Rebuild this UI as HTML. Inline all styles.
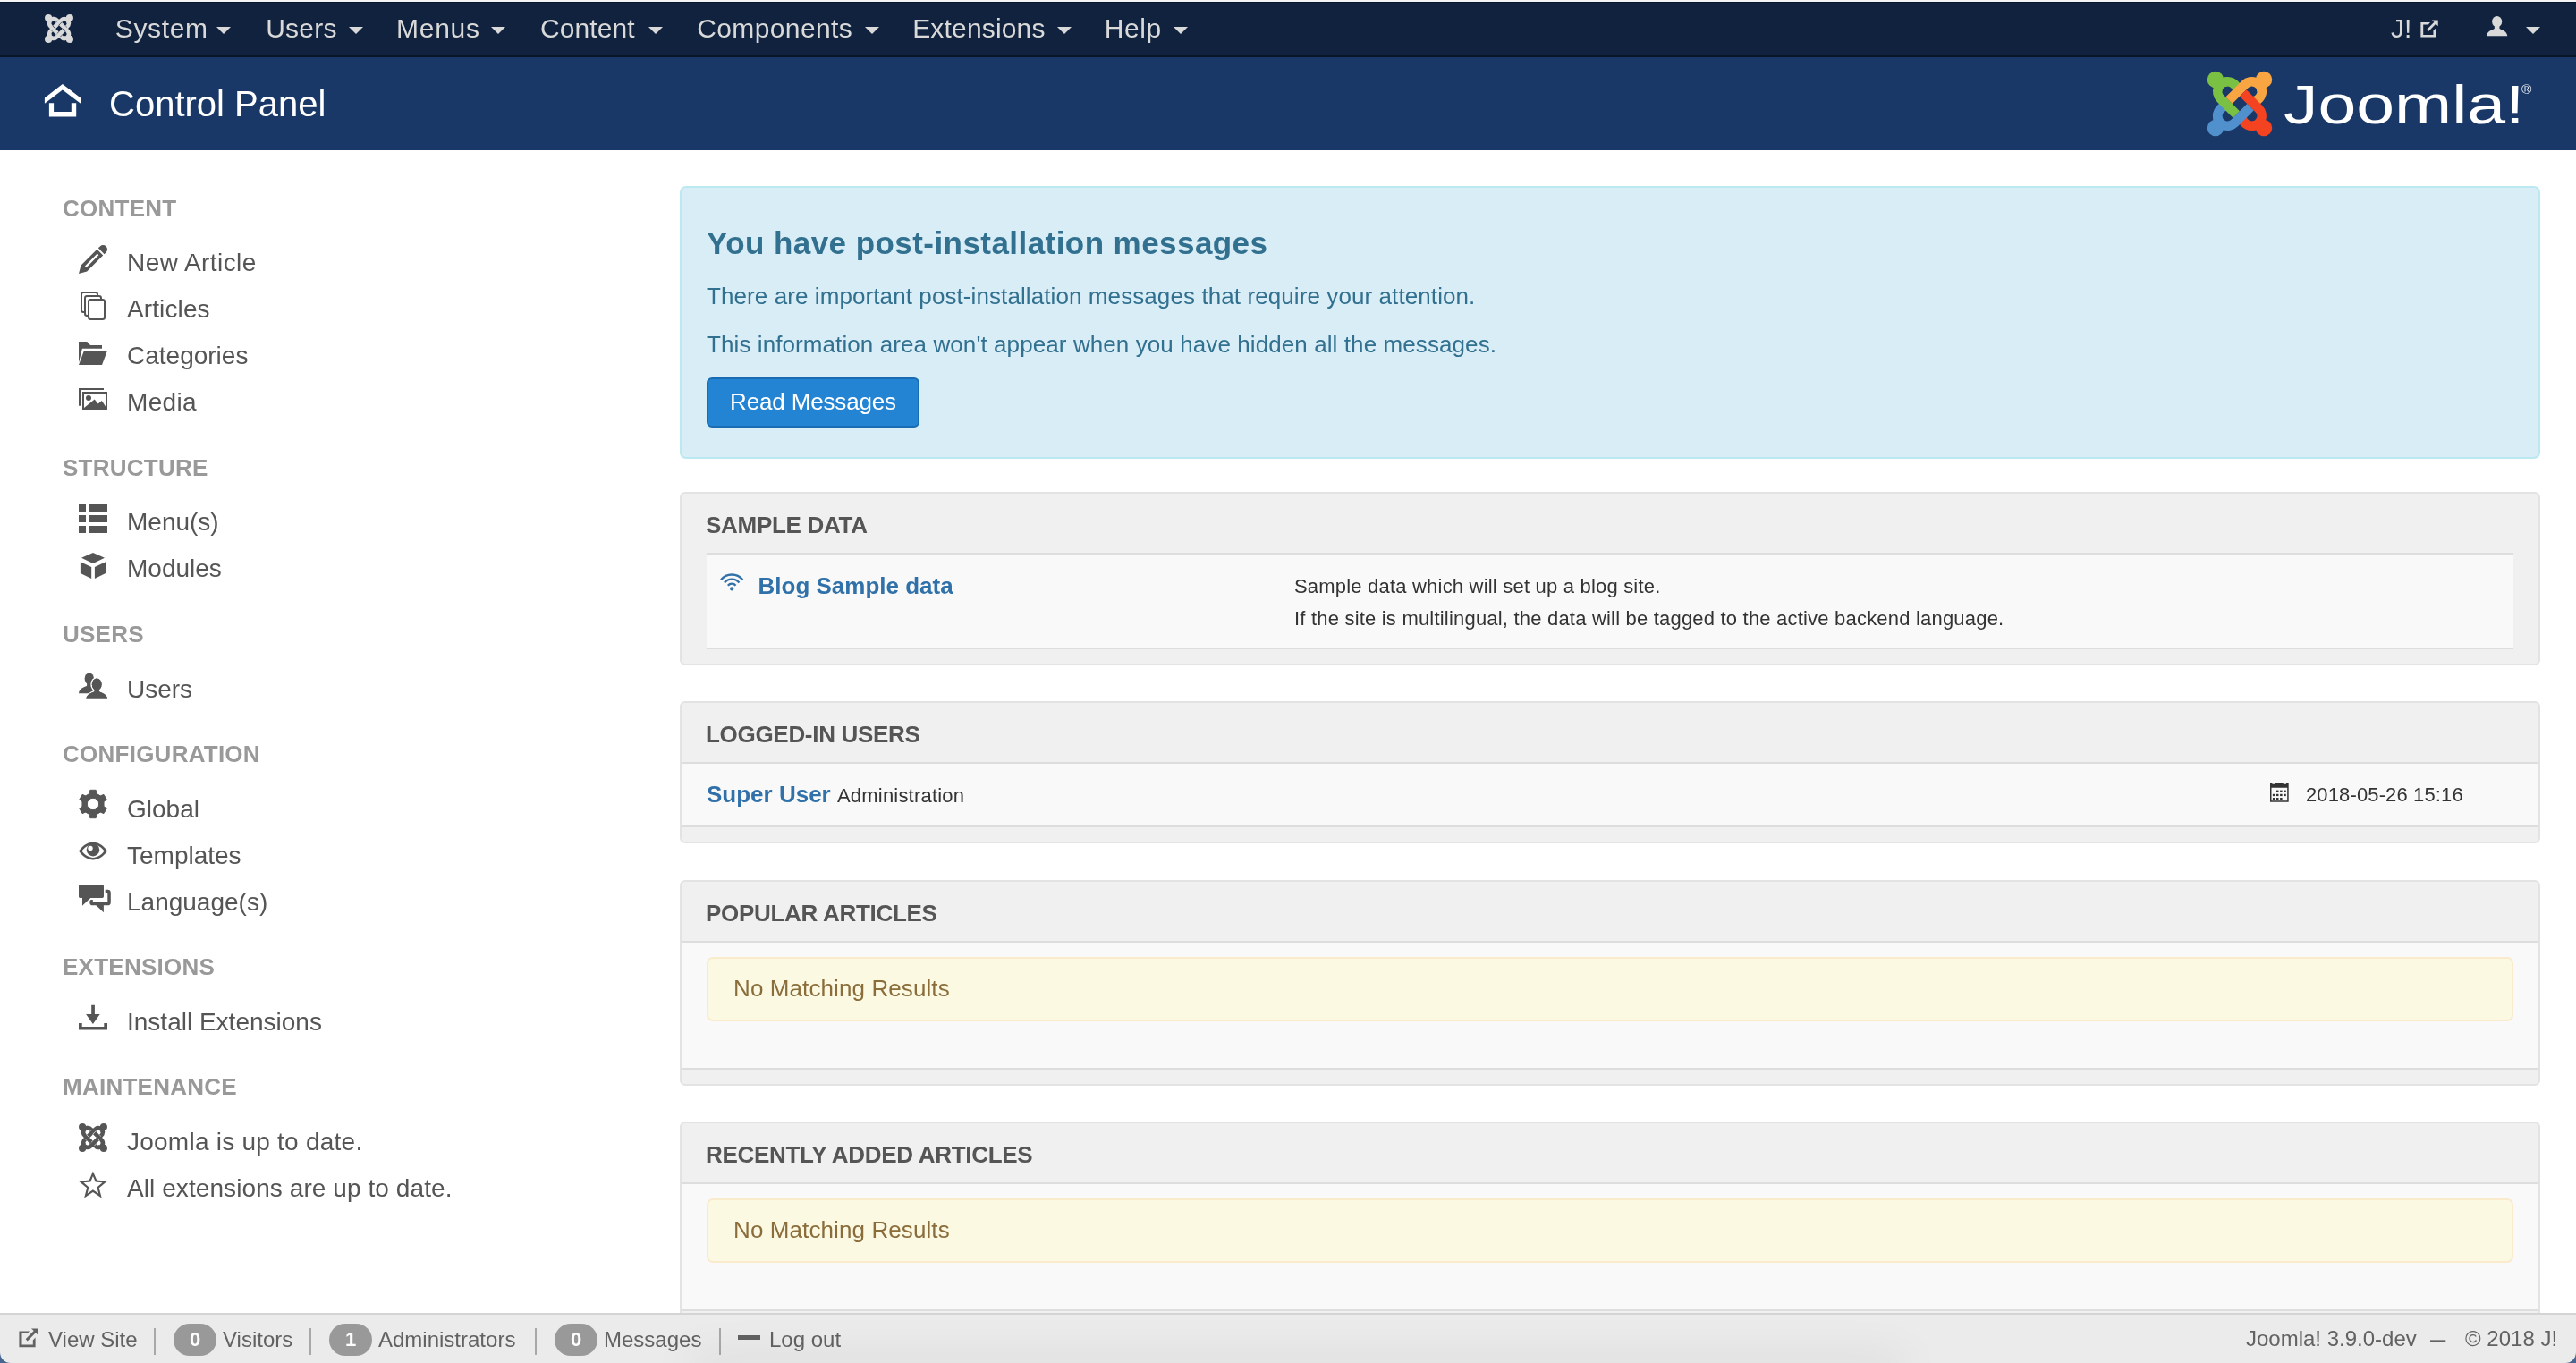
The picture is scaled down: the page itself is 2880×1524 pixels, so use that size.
<!DOCTYPE html>
<html lang="en">
<head>
<meta charset="utf-8">
<title>Control Panel - Joomla Administration</title>
<style>
*{box-sizing:border-box;margin:0;padding:0}
html,body{width:2880px;height:1524px;overflow:hidden;background:#fff}
body{font-family:"Liberation Sans",Arial,Helvetica,sans-serif;font-size:26px;line-height:36px;color:#333;position:relative}
a{color:#3071a9;text-decoration:none}
svg{display:block;overflow:visible}
i{font-style:normal}
#nav,#header,#side,#main,#status{will-change:transform}
#topline{position:absolute;left:0;top:0;width:2880px;height:2px;background:#f3f3f3}
#nav{position:absolute;left:0;top:2px;width:2880px;height:62px;background:#10223e;border-bottom:2px solid #0a1628;box-shadow:inset 0 1px 0 #07162f;color:#d9d9d9;font-size:30px;line-height:40px;white-space:nowrap}
#nav .ni{position:absolute;top:10px}
.caret{display:inline-block;width:0;height:0;vertical-align:top;border-top:8px solid #d9d9d9;border-left:8px solid transparent;border-right:8px solid transparent;margin-top:19px;margin-left:4px}
#header{position:absolute;left:0;top:64px;width:2880px;height:104px;background:#1a3867}
#header h1{position:absolute;left:122px;top:27px;font-size:40px;line-height:50px;font-weight:normal;color:#fff;white-space:nowrap}
#side{position:absolute;left:40px;top:186px;width:680px}
#side h2{font-size:26px;line-height:36px;font-weight:bold;color:#999;padding:29px 0 17px 30px;height:82px;text-transform:uppercase;letter-spacing:.25px}
#side .it{position:relative;height:52px;font-size:28px;line-height:40px;padding:6px 0 6px 102px;color:#555;white-space:nowrap}
#side .it svg{position:absolute;left:48px}
#side .d1{padding-top:7px;padding-bottom:5px}
#main{position:absolute;left:760px;top:208px;width:2080px}
.alert-info{background:#d9edf7;border:2px solid #bce8f1;border-radius:7px;color:#31708f;height:305px;margin-bottom:37px;position:relative}
.alert-info h4{font-size:35px;line-height:40px;font-weight:bold;letter-spacing:.44px;position:absolute;left:28px;top:42px;white-space:nowrap}
.alert-info p{position:absolute;left:28px;white-space:nowrap;font-size:26px;line-height:36px;letter-spacing:.09px}
.btn{position:absolute;left:28px;top:212px;height:56px;width:238px;background:#2384d3;border:2px solid #1a6cb2;border-radius:6px;color:#fff;font-size:26px;line-height:50px;text-align:center;letter-spacing:-.15px}
.well{background:#f0f0f0;border:2px solid #e3e3e3;border-radius:6px;margin-bottom:40px;padding-bottom:16px}
.well h2{font-size:26px;line-height:36px;font-weight:bold;color:#555;padding:17px 28px 13px 27px;text-transform:uppercase;letter-spacing:-.3px}
.row{background:#f9f9f9;border-top:2px solid #ddd;border-bottom:2px solid #ddd;padding:16px 28px;position:relative}
.inset{margin:0 28px}
.alert-warn{background:#fcf9e2;border:2px solid #faebcc;border-radius:7px;color:#8a6d3b;height:72px;line-height:36px;padding:15px 28px 17px;margin-bottom:36px;letter-spacing:.1px}
.small{font-size:22px;line-height:20px;letter-spacing:.2px}
#status{position:absolute;left:0;top:1468px;width:2880px;height:56px;background:#ebebeb;border-top:2px solid #d4d4d4;font-size:24px;line-height:36px;color:#626262;white-space:nowrap}
#status .t{position:absolute;top:10px}
#status .sep{position:absolute;top:15px;width:2px;height:30px;background:#a8a8a8}
#status .badge{position:absolute;top:10px;height:36px;width:48px;border-radius:18px;background:#999;color:#fff;font-weight:bold;font-size:22px;line-height:36px;text-align:center}
</style>
</head>
<body>
<div id="topline"></div>
<div id="nav">
  <svg width="36" height="36" viewBox="0 0 36 36" style="position:absolute;left:48px;top:12px"><g transform="translate(18 18) scale(1)" fill="none" stroke-width="4.65"><path transform="rotate(0)" stroke="#d9d9d9" d="M-8.07 -10.44A4.9 4.9 0 0 1 -1.17 -6.85"/><path transform="rotate(90)" stroke="#d9d9d9" d="M-8.07 -10.44A4.9 4.9 0 0 1 -1.17 -6.85"/><path transform="rotate(180)" stroke="#d9d9d9" d="M-8.07 -10.44A4.9 4.9 0 0 1 -1.17 -6.85"/><path transform="rotate(270)" stroke="#d9d9d9" d="M-8.07 -10.44A4.9 4.9 0 0 1 -1.17 -6.85"/><path transform="rotate(0)" stroke="#10223e" stroke-width="5.35" d="M-7.26 -0.34L-1.29 5.64"/><path transform="rotate(0)" stroke="#d9d9d9" d="M-6 -10.9A4.9 4.9 0 0 0 -9.46 -2.54L-1.64 5.29"/><circle transform="rotate(0)" cx="-11.9" cy="-11.9" r="4.07" fill="#d9d9d9" stroke="none"/><path transform="rotate(90)" stroke="#10223e" stroke-width="5.35" d="M-7.26 -0.34L-1.29 5.64"/><path transform="rotate(90)" stroke="#d9d9d9" d="M-6 -10.9A4.9 4.9 0 0 0 -9.46 -2.54L-1.64 5.29"/><circle transform="rotate(90)" cx="-11.9" cy="-11.9" r="4.07" fill="#d9d9d9" stroke="none"/><path transform="rotate(180)" stroke="#10223e" stroke-width="5.35" d="M-7.26 -0.34L-1.29 5.64"/><path transform="rotate(180)" stroke="#d9d9d9" d="M-6 -10.9A4.9 4.9 0 0 0 -9.46 -2.54L-1.64 5.29"/><circle transform="rotate(180)" cx="-11.9" cy="-11.9" r="4.07" fill="#d9d9d9" stroke="none"/><path transform="rotate(270)" stroke="#10223e" stroke-width="5.35" d="M-7.26 -0.34L-1.29 5.64"/><path transform="rotate(270)" stroke="#d9d9d9" d="M-6 -10.9A4.9 4.9 0 0 0 -9.46 -2.54L-1.64 5.29"/><circle transform="rotate(270)" cx="-11.9" cy="-11.9" r="4.07" fill="#d9d9d9" stroke="none"/></g></svg>
  <span class="ni" style="left:128.8px;letter-spacing:0.63px">System</span><i class="caret" style="position:absolute;left:238.3px;top:9px"></i><span class="ni" style="left:297.2px;letter-spacing:0.25px">Users</span><i class="caret" style="position:absolute;left:386.3px;top:9px"></i><span class="ni" style="left:443px;letter-spacing:0.75px">Menus</span><i class="caret" style="position:absolute;left:544.9px;top:9px"></i><span class="ni" style="left:604px;letter-spacing:0.07px">Content</span><i class="caret" style="position:absolute;left:720.6px;top:9px"></i><span class="ni" style="left:779.2px;letter-spacing:0.39px">Components</span><i class="caret" style="position:absolute;left:963px;top:9px"></i><span class="ni" style="left:1020.2px;letter-spacing:0.17px">Extensions</span><i class="caret" style="position:absolute;left:1178px;top:9px"></i><span class="ni" style="left:1234.8px;letter-spacing:0.59px">Help</span><i class="caret" style="position:absolute;left:1307.8px;top:9px"></i>
  <span class="ni" style="left:2673px">J!</span>
  <svg width="20.13" height="19.4" viewBox="0 0 22 21.2" style="position:absolute;left:2705.8px;top:20.2px"><g fill="#d9d9d9"><path d="M0.4 3.4H12L9.6 6H3.5V18.6H15.8V13.4L18.6 10.6V21.2H0.4Z"/><path d="M14 0.5H21.6V7.8L18.83 5.18L9.73 14.43L7.67 12.37L16.77 3.12Z"/></g></svg>
  <svg width="23.3" height="22.3" viewBox="0 0 23.3 22.3" style="position:absolute;left:2779.6px;top:15.9px"><g fill="#d9d9d9"><path d="M0 22.3C0.6 16.8 5.35 16 8.85 14L8.85 10.85L14.45 10.85L14.45 14C17.95 16 22.7 16.8 23.3 22.3Z"/><ellipse cx="11.65" cy="6.2" rx="5.5" ry="6.2"/></g></svg>
  <i class="caret" style="position:absolute;left:2820px;top:9px"></i>
</div>
<div id="header">
  <svg width="42" height="38" viewBox="0 0 42 38" style="position:absolute;left:49px;top:29.6px"><path fill="#fff" d="M0.9 15.4L20.9 0L41.1 15.4V21.8L20.9 6.5L0.9 21.8ZM5.9 21.3H11.1V31H30.8V21.3H36.2V36.5H5.9Z"/></svg>
  <h1>Control Panel</h1>
  <svg width="80" height="80" viewBox="0 0 80 80" style="position:absolute;left:2464.15px;top:11.6px"><g transform="translate(40 40) scale(2.27)" fill="none" stroke-width="4.65"><path transform="rotate(0)" stroke="#7ac143" d="M-8.07 -10.44A4.9 4.9 0 0 1 -1.17 -6.85"/><path transform="rotate(90)" stroke="#f9a541" d="M-8.07 -10.44A4.9 4.9 0 0 1 -1.17 -6.85"/><path transform="rotate(180)" stroke="#f44321" d="M-8.07 -10.44A4.9 4.9 0 0 1 -1.17 -6.85"/><path transform="rotate(270)" stroke="#5091cd" d="M-8.07 -10.44A4.9 4.9 0 0 1 -1.17 -6.85"/><path transform="rotate(0)" stroke="#7ac143" d="M-6 -10.9A4.9 4.9 0 0 0 -9.46 -2.54L-1.64 5.29"/><circle transform="rotate(0)" cx="-11.9" cy="-11.9" r="4.07" fill="#7ac143" stroke="none"/><path transform="rotate(90)" stroke="#f9a541" d="M-6 -10.9A4.9 4.9 0 0 0 -9.46 -2.54L-1.64 5.29"/><circle transform="rotate(90)" cx="-11.9" cy="-11.9" r="4.07" fill="#f9a541" stroke="none"/><path transform="rotate(180)" stroke="#f44321" d="M-6 -10.9A4.9 4.9 0 0 0 -9.46 -2.54L-1.64 5.29"/><circle transform="rotate(180)" cx="-11.9" cy="-11.9" r="4.07" fill="#f44321" stroke="none"/><path transform="rotate(270)" stroke="#5091cd" d="M-6 -10.9A4.9 4.9 0 0 0 -9.46 -2.54L-1.64 5.29"/><circle transform="rotate(270)" cx="-11.9" cy="-11.9" r="4.07" fill="#5091cd" stroke="none"/></g></svg>
  <svg width="300" height="80" viewBox="0 0 300 80" style="position:absolute;left:2548px;top:16px"><text x="5" y="58.2" font-family="Liberation Sans, Arial, sans-serif" font-size="61.7" fill="#fff" textLength="269.5" lengthAdjust="spacingAndGlyphs">Joomla!</text><text x="271" y="25.2" font-family="Liberation Sans, Arial, sans-serif" font-size="15.5" fill="#e8ecf3">®</text></svg>
</div>
<div id="side">
  <h2>Content</h2>
  <div class="it" style="letter-spacing:0.43px"><svg width="40" height="36" viewBox="0 -2 40 36" style="top:4px"><g transform="translate(0 32) rotate(-45)" fill="#555"><path fill-rule="evenodd" d="M0 0L8.2 -4.8H33.7V4.8H8.2ZM11 -1.15H30.5V1.15H11Z"/><path d="M35.7 -4.8H38.5A4.8 4.8 0 0 1 38.5 4.8H35.7Z"/></g></svg>New Article</div>
  <div class="it" style="letter-spacing:0.11px"><svg width="40" height="36" viewBox="0 -2 40 36" style="top:4px"><g fill="#fff" stroke="#555" stroke-width="2"><rect x="3" y="1" width="18" height="22" rx="2.2"/><rect x="7" y="5" width="18" height="22" rx="2.2"/><rect x="11" y="9" width="18" height="22" rx="2.2"/></g></svg>Articles</div>
  <div class="it"><svg width="40" height="36" viewBox="0 -2 40 36" style="top:4px"><path fill="#555" d="M0 4H9.3L13 8H26V11.8H3.9L0 27.6ZM6 14H32L26 30H0Z"/></svg>Categories</div>
  <div class="it" style="letter-spacing:0.33px"><svg width="40" height="36" viewBox="0 -2 40 36" style="top:4px"><g fill="#555"><path d="M0 4H28V5.9H2V23.8H0Z"/><path fill-rule="evenodd" d="M4 8H32V28H4ZM6 10V26H30V10Z"/><circle cx="11" cy="14.9" r="3"/><path d="M6 26L17.7 16.4L21.7 21.6L25.8 18.1L30 24.6V26Z"/></g></svg>Media</div>
  <h2>Structure</h2>
  <div class="it"><svg width="40" height="36" viewBox="0 -2 40 36" style="top:4px"><path fill="#555" d="M0 0h8v8h-8zM12 0h20v8h-20zM0 12h8v8h-8zM12 12h20v8h-20zM0 24h8v8h-8zM12 24h20v8h-20z"/></svg>Menu(s)</div>
  <div class="it"><svg width="40" height="36" viewBox="0 -2 40 36" style="top:4px"><path fill="#555" d="M16 2L29 7.7L16 13.9L3 7.7ZM1.9 12.3L14.2 17.9V31.1L1.9 24.9ZM30.1 12.3V24.9L17.9 31.1V17.9Z"/></svg>Modules</div>
  <h2>Users</h2>
  <div class="it d1"><svg width="40" height="36" viewBox="0 -2 40 36" style="top:3.7px"><g fill="#555"><path d="M0 25.2C0.6 19.56 5.6 18.76 9.1 16.76L9.1 13.53L14.5 13.53L14.5 16.76C18 18.76 23 19.56 23.6 25.2Z"/><ellipse cx="11.8" cy="8.8" rx="5.2" ry="6.3"/><g stroke="#fff" stroke-width="3" paint-order="stroke"><path d="M8.3 31.5C8.9 26.16 13.9 25.36 17.4 23.36L17.4 20.3L23 20.3L23 23.36C26.5 25.36 31.5 26.16 32.1 31.5Z"/><ellipse cx="20.2" cy="15.2" rx="5.4" ry="6.8"/></g><path d="M8.3 31.5C8.9 26.16 13.9 25.36 17.4 23.36L17.4 20.3L23 20.3L23 23.36C26.5 25.36 31.5 26.16 32.1 31.5Z"/><ellipse cx="20.2" cy="15.2" rx="5.4" ry="6.8"/></g></svg>Users</div>
  <h2>Configuration</h2>
  <div class="it d1"><svg width="40" height="36" viewBox="0 -2 40 36" style="top:3.4px"><path fill="#555" fill-rule="evenodd" stroke="#555" stroke-width="1" stroke-linejoin="round" d="M12.2 4.3L12.81 0.32L19.19 0.32L19.8 4.3L24.23 6.86L27.98 5.4L31.17 10.92L28.03 13.44L28.03 18.56L31.17 21.08L27.98 26.6L24.23 25.14L19.8 27.7L19.19 31.68L12.81 31.68L12.2 27.7L7.77 25.14L4.02 26.6L0.83 21.08L3.97 18.56L3.97 13.44L0.83 10.92L4.02 5.4L7.77 6.86ZM22.7 16A6.7 6.7 0 1 0 9.3 16A6.7 6.7 0 1 0 22.7 16Z"/></svg>Global</div>
  <div class="it d1"><svg width="40" height="36" viewBox="0 -2 40 36" style="top:3.9px"><path fill="#555" d="M0 15.6C5 8.5 10.5 5.7 16 5.7S27 8.5 32 15.6C27 22.6 21.5 25.5 16 25.5S5 22.6 0 15.6Z"/><path fill="#fff" d="M3.4 15.6C7 10.6 11.5 8.3 16 8.3S25 10.6 28.6 15.6C25 20.5 20.5 22.9 16 22.9S7 20.5 3.4 15.6Z"/><circle cx="16" cy="14.2" r="7.2" fill="#555"/><circle cx="13" cy="12.4" r="2.7" fill="#fff"/></svg>Templates</div>
  <div class="it d1"><svg width="40" height="36" viewBox="0 -2 40 36" style="top:4.8px"><g fill="#555"><rect x="14.05" y="7.5" width="20" height="14" rx="1.6" fill="none" stroke="#555" stroke-width="3.5"/><path d="M19.2 23L27.9 31.3V23Z"/><g stroke="#fff" stroke-width="3.6" paint-order="stroke"><path d="M2.5 0H25.4A2.5 2.5 0 0 1 27.9 2.5V12.6A2.5 2.5 0 0 1 25.4 15.1H13L4 23.6V15.1H2.5A2.5 2.5 0 0 1 0 12.6V2.5A2.5 2.5 0 0 1 2.5 0Z"/></g><path d="M2.5 0H25.4A2.5 2.5 0 0 1 27.9 2.5V12.6A2.5 2.5 0 0 1 25.4 15.1H13L4 23.6V15.1H2.5A2.5 2.5 0 0 1 0 12.6V2.5A2.5 2.5 0 0 1 2.5 0Z"/></g></svg>Language(s)</div>
  <h2>Extensions</h2>
  <div class="it d1"><svg width="40" height="36" viewBox="0 -2 40 36" style="top:4.3px"><path fill="#555" d="M0 21.9h3.7v4h24.6v-4h3.7v7.6h-32zM14.2 1.8h3.7v10.1h5.8L15.9 23L8.1 11.9h6.1z"/></svg>Install Extensions</div>
  <h2>Maintenance</h2>
  <div class="it d1" style="letter-spacing:0.24px"><svg width="40" height="36" viewBox="0 -2 40 36" style="top:4.9px"><g transform="translate(16 15) scale(1)" fill="none" stroke-width="4.65"><path transform="rotate(0)" stroke="#555" d="M-8.07 -10.44A4.9 4.9 0 0 1 -1.17 -6.85"/><path transform="rotate(90)" stroke="#555" d="M-8.07 -10.44A4.9 4.9 0 0 1 -1.17 -6.85"/><path transform="rotate(180)" stroke="#555" d="M-8.07 -10.44A4.9 4.9 0 0 1 -1.17 -6.85"/><path transform="rotate(270)" stroke="#555" d="M-8.07 -10.44A4.9 4.9 0 0 1 -1.17 -6.85"/><path transform="rotate(0)" stroke="#fff" stroke-width="5.35" d="M-7.26 -0.34L-1.29 5.64"/><path transform="rotate(0)" stroke="#555" d="M-6 -10.9A4.9 4.9 0 0 0 -9.46 -2.54L-1.64 5.29"/><circle transform="rotate(0)" cx="-11.9" cy="-11.9" r="4.07" fill="#555" stroke="none"/><path transform="rotate(90)" stroke="#fff" stroke-width="5.35" d="M-7.26 -0.34L-1.29 5.64"/><path transform="rotate(90)" stroke="#555" d="M-6 -10.9A4.9 4.9 0 0 0 -9.46 -2.54L-1.64 5.29"/><circle transform="rotate(90)" cx="-11.9" cy="-11.9" r="4.07" fill="#555" stroke="none"/><path transform="rotate(180)" stroke="#fff" stroke-width="5.35" d="M-7.26 -0.34L-1.29 5.64"/><path transform="rotate(180)" stroke="#555" d="M-6 -10.9A4.9 4.9 0 0 0 -9.46 -2.54L-1.64 5.29"/><circle transform="rotate(180)" cx="-11.9" cy="-11.9" r="4.07" fill="#555" stroke="none"/><path transform="rotate(270)" stroke="#fff" stroke-width="5.35" d="M-7.26 -0.34L-1.29 5.64"/><path transform="rotate(270)" stroke="#555" d="M-6 -10.9A4.9 4.9 0 0 0 -9.46 -2.54L-1.64 5.29"/><circle transform="rotate(270)" cx="-11.9" cy="-11.9" r="4.07" fill="#555" stroke="none"/></g></svg>Joomla is up to date.</div>
  <div class="it d1" style="letter-spacing:0.08px"><svg width="40" height="36" viewBox="0 -2 40 36" style="top:4.7px"><path fill="#555" fill-rule="evenodd" d="M15.9 0.5L20.2 10.4L31.8 11.7L22.8 19.2L25.7 30.4L15.9 23.9L6.1 30.4L9.1 19.2L0.1 11.7L11.8 10.4ZM15.95 6.01L18.72 12.4L26.55 13.28L20.38 18.42L22.21 25.51L15.9 21.32L9.65 25.47L11.53 18.43L5.35 13.28L13.3 12.4Z"/></svg>All extensions are up to date.</div>
</div>
<div id="main">
  <div class="alert-info">
    <h4>You have post-installation messages</h4>
    <p style="top:103px">There are important post-installation messages that require your attention.</p>
    <p style="top:157px">This information area won't appear when you have hidden all the messages.</p>
    <a class="btn">Read Messages</a>
  </div>
  <div class="well">
    <h2>Sample Data</h2>
    <div class="row inset" style="height:108px">
      <svg width="27" height="22" viewBox="0 0 27 22" style="position:absolute;left:15px;top:20.3px"><g fill="none" stroke="#3071a9" stroke-width="2.3"><path d="M8.83 14.74A5.7 5.7 0 0 1 17.57 14.74"/><path d="M4.93 11.46A10.8 10.8 0 0 1 21.47 11.46"/><path d="M1.02 8.18A15.9 15.9 0 0 1 25.38 8.18"/></g><circle cx="13.2" cy="18.4" r="2.05" fill="#3071a9"/></svg>
      <a style="position:absolute;left:57.5px;top:17px;font-weight:bold">Blog Sample data</a>
      <div style="position:absolute;left:657px;top:16px;white-space:nowrap"><span class="small">Sample data which will set up a blog site.</span><br><span class="small">If the site is multilingual, the data will be tagged to the active backend language.</span></div>
    </div>
  </div>
  <div class="well" style="margin-bottom:41px">
    <h2>Logged-in Users</h2>
    <div class="row" style="height:73px">
      <a style="font-weight:bold">Super User</a> <span class="small">Administration</span>
      <svg width="20.7" height="21.8" viewBox="0 0 20.7 21.8" style="position:absolute;left:1776.3px;top:20.5px"><path fill="#333" fill-rule="evenodd" d="M0 0H2.4V1.8H5.7V0H14.7V1.8H18V0H20.7V21.8H0ZM1.5 5.8V20.3H19.2V5.8Z"/><g fill="#333"><rect x="7" y="8.6" width="2.5" height="2.3"/><rect x="11.1" y="8.6" width="2.5" height="2.3"/><rect x="15.3" y="8.6" width="2.5" height="2.3"/><rect x="2.9" y="12.8" width="2.5" height="2.3"/><rect x="7" y="12.8" width="2.5" height="2.3"/><rect x="11.1" y="12.8" width="2.5" height="2.3"/><rect x="15.3" y="12.8" width="2.5" height="2.3"/><rect x="2.9" y="17" width="2.5" height="2.3"/><rect x="7" y="17" width="2.5" height="2.3"/><rect x="11.1" y="17" width="2.5" height="2.3"/></g></svg>
      <span class="small" style="position:absolute;left:1816px;top:17px;line-height:36px;letter-spacing:.13px">2018-05-26 15:16</span>
    </div>
  </div>
  <div class="well">
    <h2>Popular Articles</h2>
    <div class="row"><div class="alert-warn">No Matching Results</div></div>
  </div>
  <div class="well">
    <h2>Recently Added Articles</h2>
    <div class="row"><div class="alert-warn">No Matching Results</div></div>
  </div>
</div>
<div id="status">
  <svg width="22" height="21.2" viewBox="0 0 22 21.2" style="position:absolute;left:20.9px;top:14.7px"><g fill="#626262"><path d="M0.4 3.4H12L9.6 6H3.5V18.6H15.8V13.4L18.6 10.6V21.2H0.4Z"/><path d="M14 0.5H21.6V7.8L18.83 5.18L9.73 14.43L7.67 12.37L16.77 3.12Z"/></g></svg>
  <span class="t" style="left:54px">View Site</span>
  <i class="sep" style="left:172px"></i>
  <b class="badge" style="left:194px">0</b><span class="t" style="left:249px">Visitors</span>
  <i class="sep" style="left:346px"></i>
  <b class="badge" style="left:368px">1</b><span class="t" style="left:423px">Administrators</span>
  <i class="sep" style="left:598px"></i>
  <b class="badge" style="left:620px">0</b><span class="t" style="left:675px">Messages</span>
  <i class="sep" style="left:804px"></i>
  <i style="position:absolute;left:825.4px;top:22.8px;width:24.2px;height:5.5px;background:#626262"></i>
  <span class="t" style="left:860px">Log out</span>
  <span class="t" style="left:2511px;top:9px">Joomla! 3.9.0-dev</span>
  <span class="t" style="left:2717px;top:9px;display:inline-block;transform:scaleX(.72);transform-origin:0 0">—</span>
  <span class="t" style="left:2756px;top:9px">© 2018 J!</span>
</div>
<i style="position:absolute;left:770px;top:1524px;width:1360px;height:10px;box-shadow:0 0 50px 0 rgba(0,0,0,.2)"></i>
<svg width="12" height="12" viewBox="0 0 12 12" style="position:absolute;left:0;top:1512px"><path fill="#46658f" d="M0 0A12 12 0 0 0 12 12H0Z"/></svg>
<svg width="12" height="12" viewBox="0 0 12 12" style="position:absolute;left:2868px;top:1512px"><path fill="#46658f" d="M12 0A12 12 0 0 1 0 12H12Z"/></svg>
<script>if(window.innerWidth&&window.innerWidth!==2880){document.documentElement.style.zoom=window.innerWidth/2880;}</script>
</body>
</html>
